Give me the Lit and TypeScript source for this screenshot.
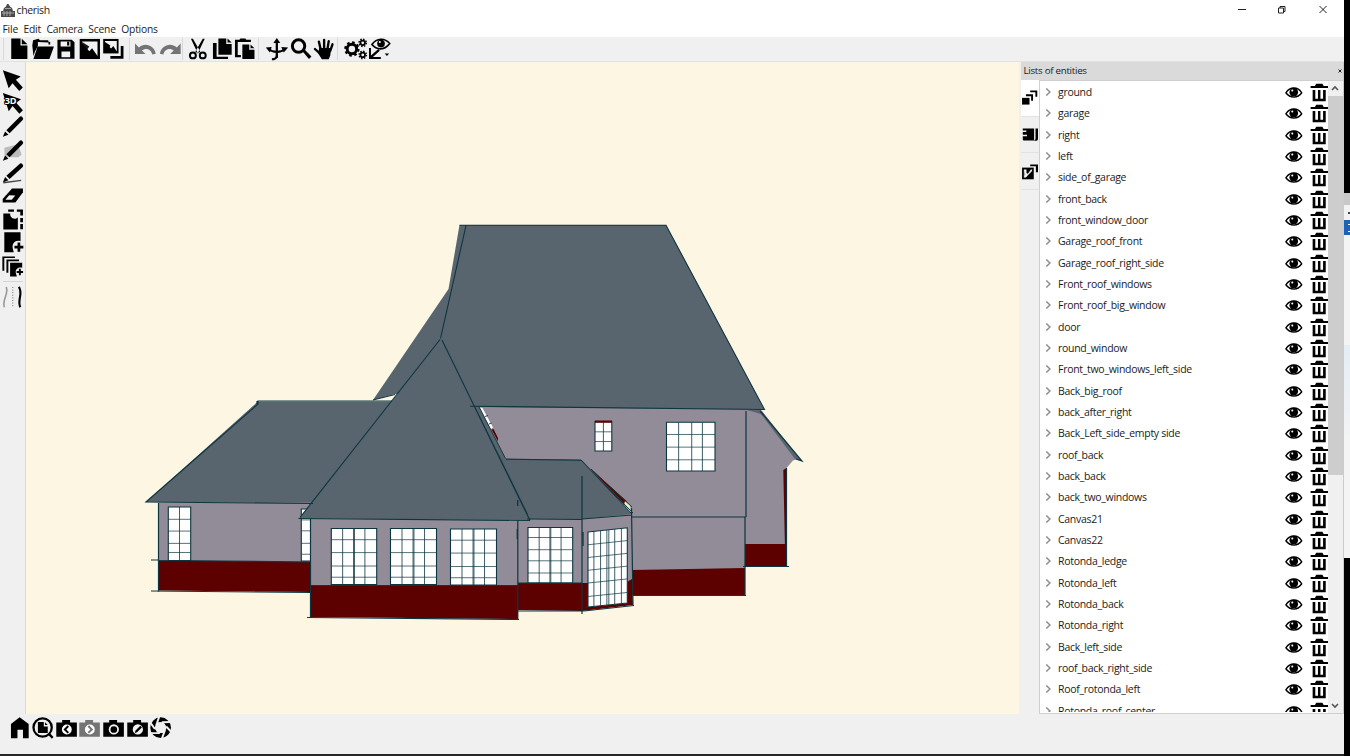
import { LitElement, html, svg, css } from "lit";
import { customElement } from "lit/decorators.js";

const INK = "#0d3640";
const SLATE = "#58646e";
const WALL = "#918c97";
const RED = "#5c0000";

// Every glyph is drawn on a 24 x 24 grid.
const glyphs: Record<string, unknown> = {
  file: svg`<path d="M4.3 1.3h9.4v7.2h7v13.6H4.3zM15 1.6l5.7 5.6H15z"/>`,
  open: svg`<path d="M1.3 8.500l.8-5.500 5.500-1.500 1.500 1.500h8.400v1.500l2 .3v2.700h-1.800V5.300L7 5v4L4 14.500 2.500 19z"/><path d="M6.600 9.500h16.700l-4.600 12.600H2.500z"/>`,
  save: svg`<path d="M3.500 2.500h14.500l2.800 2.600V22H3.500z"/><path fill="#f2f2f2" d="M6.700 4.300h10v5.200h-10zM7.600 14.500h8.800v6H7.600z"/><path d="M13.300 4.500h2.200v4h-2.200z"/>`,
  image: svg`<path d="M1.700 1.800h20.600v20.400H1.700z"/><path fill="#f2f2f2" d="M4.200 4.400h15.600v14.800l-5.500-8-2.800 3L4.200 6.500z"/><path d="M4.200 9 9 13l2.500-3.500L4.200 5z" opacity=".9"/>`,
  images: svg`<path d="M1.200 1.800h15.600v14.700H1.200z"/><path fill="#f2f2f2" d="M3 4h12v10.500L11.500 9 9.300 11.500 3 5.500z"/><path d="m3 8 4 3 1.500-2.500L3 5z"/><path d="M19 9h2.800v13H8.500v-3H19z"/>`,
  undo: svg`<path fill="#747474" d="M1 6.500v10.700h10.700L8 13.500c3-2.600 9-2.500 10.600 4.200l3.400-.9C21 8.500 11 4.700 5 10.500z"/>`,
  redo: svg`<path fill="#747474" d="M23 6.500v10.700H12.300l3.700-3.700c-3-2.600-9-2.500-10.600 4.200L2 16.800C3 8.500 13 4.700 19 10.500z"/>`,
  cut: svg`<path d="M5 1.500 7 1.500 14.500 14.500 12 16.500zM19 1.500h-2L9.500 14.500l2.500 2z"/><g fill="none" stroke="#000" stroke-width="2"><circle cx="7" cy="18.500" r="3"/><circle cx="17" cy="18.500" r="3"/></g>`,
  copy: svg`<path d="M8.500 1.300h8v5.500h5.500v11H8.500zM17.800 1.300 22 5.500h-4.200zM3 6h3.700v13.800h11.600v2.400H3z"/>`,
  paste: svg`<path d="M2 2.500h4.500l1-1.200h5l1 1.200h4.700V5H4.800v13H8v2.500H2zM9.500 7.500h7v5.200h5.300v9.500H9.500zM17.800 7.500l4 3.800h-4z"/>`,
  orbit: svg`<g fill="none" stroke="#000" stroke-width="2.300"><path d="M12 4v17"/><path d="M3.500 12c4.500 3.800 12.500 3.800 17 0"/></g><path d="m12 .8 3.500 5h-7zM23.500 10.500l-4.500 5-2.500-5.500zM.8 10.500l6-.5L5 15.500zM7 21.500c3-.3 4-1.500 4-3h2.200c0 3.500-3.500 5-6.200 5z"/>`,
  zoomer: svg`<circle cx="9.700" cy="9" r="6.300" fill="none" stroke="#000" stroke-width="3"/><path d="m13.800 14.500 2-2 7 7-2.500 2.600z"/>`,
  hand: svg`<g fill="none" stroke="#000" stroke-linecap="round" stroke-width="2.400"><path d="M9 13 7 4.500M12.300 12V2.700M15.700 12l1.300-8M18.500 14l2.300-6.800M8.500 17 3 12"/></g><path d="M7.500 11h12l-1 7.500-1.500 4h-7L6 16z"/>`,
  gears: svg`<g fill="none" stroke="#000"><circle cx="8" cy="12" r="4.800" stroke-width="3"/><circle cx="8" cy="12" r="6.700" stroke-width="2.200" stroke-dasharray="2.700 2.560"/><circle cx="19" cy="5.700" r="2.300" stroke-width="1.800"/><circle cx="19" cy="5.700" r="3.700" stroke-width="1.500" stroke-dasharray="1.500 1.400"/><circle cx="19" cy="18" r="2.300" stroke-width="1.800"/><circle cx="19" cy="18" r="3.700" stroke-width="1.500" stroke-dasharray="1.500 1.400"/></g>`,
  view: svg`<path d="M4 7.500C9 .500 17 .500 22 6.500 17 13.500 9 13.500 4 7.500z" fill="none" stroke="#000" stroke-width="1.700"/><circle cx="13.200" cy="6.500" r="3.900"/><circle cx="12" cy="5" r="1" fill="#fff"/><path d="M1 11h2v7.500L10.500 12l1.500 1.700L5 20.200h8v2H1zM17 16.500h4.500L19.200 19z"/>`,
  arrow: svg`<path d="m1.500 1.300 18.500 6.500-5 3.400 7.200 8-3.700 3.500-7-8-4 5.300z"/>`,
  arrow3d: svg`<path d="m1.500 1 18.800 6.500-5 3.700 7 7.800-3.700 3.500-7-8-4 5.500z"/><text x="3.500" y="12.500" class="g3d">3D</text>`,
  pen: svg`<path d="m18.500 2.200a2.200 2.200 0 0 1 3.300 3.300L8.500 19l-3.400-3.300z"/><path d="m3.800 17 3.500 3.400-5.800 2.200z"/>`,
  brush: svg`<path fill="#bcbcbc" d="M3 9 17 5.500l4 10.500-3.500 3H3.500z"/><path d="m18.500 2.200a2.200 2.200 0 0 1 3.300 3.300L8.500 19l-3.400-3.300z"/><path d="m3.800 17 3.500 3.400-5.800 2.200z"/>`,
  penline: svg`<path d="m18.500 2.200a2.200 2.200 0 0 1 3.300 3.300L8.500 17.500l-3.400-3.300z"/><path d="m3.800 15.500 3.500 3.400-5.800 2.200z"/><path d="M2 21.500 20.500 19" stroke="#444" stroke-width="1.400"/>`,
  eraser: svg`<path d="M11 3.500h11.300v4L14.500 18H1.300v-3.500z"/><path fill="#f2f2f2" d="m8 10.700 6.400.1-3.700 4.500H4.200z"/>`,
  crop: svg`<path d="M2 5.800h7.200c-1 4 4.400 7.300 7.800 3.700V22.300H2z"/><path d="M7 1.500h6V4H7zm9 0h6.300v6.300h-2.800V4H16zM19.500 10.300h2.800v4.400h-2.800zm0 6.300h2.800V22h-2.800z"/>`,
  addpage: svg`<path d="M3 1.300h16.800v9.200c-5-1.500-9.300 2-8 7.800l1 3.700H3z"/><path d="M13.500 15.300h3.200V12h2.800v3.300h3.200v2.800h-3.200v3.300h-2.800v-3.300h-3.200z"/>`,
  addstack: svg`<path d="M1 1.500h13v1.700H3v13H1zM5.200 4.700h13v1.700H7.200v12h-2z"/><path d="M9 8h12.500v5.300c-4-1.500-7.500 1.500-6.500 5.500l1 3.500H9z"/><path d="M15.800 16.500h2.300v-2.300h2v2.300h2.300v2.200h-2.300V21h-2v-2.300h-2.300z"/>`,
  curves: svg`<g fill="none"><path d="M5 1c3 7-4.500 13-2 21" stroke="#9a9a9a" stroke-width="1.700"/><path d="M11.800 1v21" stroke="#666" stroke-width="1" stroke-dasharray="1 1.700"/><path d="M18 1c5 7-2 13 1.500 21" stroke="#000" stroke-width="2.200"/></g>`,
  home: svg`<path d="M11.800 1 21 8v14.300h-5.800v-8.500H9.600v8.500H3V8z"/>`,
  search: svg`<circle cx="11.800" cy="11.500" r="9.300" fill="none" stroke="#000" stroke-width="2.300"/><path d="M7 6h6v4.500h4V17H7zM14.200 6.200 17 9h-2.800zM17 18.500l1.800-1.800 4 4.500-1.600 1.800z"/>`,
  camprev: svg`<path d="M1.300 6.500h6V4h8v2.500h6.900v14.300H1.300z"/><circle cx="12" cy="13.500" r="5" fill="#fff"/><path d="m13.500 10-3.500 3.500 3.500 3.500" fill="none" stroke="#000" stroke-width="2"/>`,
  camnext: svg`<path fill="#747474" d="M1.300 6.500h6V4h8v2.500h6.900v14.300H1.300z"/><circle cx="12" cy="13.500" r="5" fill="#fff"/><path d="m10.500 10 3.500 3.500-3.500 3.500" fill="none" stroke="#747474" stroke-width="2"/>`,
  cam: svg`<path d="M1.300 6.500h6V4h8v2.500h6.900v14.300H1.300z"/><circle cx="12" cy="13.500" r="4.300" fill="#000" stroke="#f2f2f2" stroke-width="1.800"/>`,
  camedit: svg`<path d="M1.300 6.500h6V4h8v2.500h6.900v14.300H1.300z"/><circle cx="12" cy="13.500" r="5.200" fill="#f2f2f2"/><path d="m9 17 .5-2.300 5-5 1.700 1.700-5 5z"/>`,
  aperture: svg`<circle cx="11.800" cy="11.700" r="8" fill="none" stroke="#000" stroke-width="5"/><path fill="#f0f0f0" d="M8.800 6.200h6l3.200 5.500-3.200 5.500h-6L5.600 11.700z"/><g stroke="#f0f0f0" stroke-width="2"><path d="M7.300 9.500 10.500 0M13 6.200 22.500 6M17.500 10.500l5.500 6M16.300 14 13 23M11 17.200H1M6 13 1 6"/></g>`,
  eye: svg`<path d="M3.200 12.300C8 5 17 5 21.500 12.300 17 19 8 19 3.200 12.300z" fill="none" stroke="#000" stroke-width="1.600"/><circle cx="12.300" cy="11.600" r="5"/><circle cx="10.600" cy="9.600" r="1.200" fill="#fff"/>`,
  trash: svg`<path d="M8.500 1.500h7L17 4h5v2.700H2.200V4h4.900z"/><path d="M4.500 9h3v10.500h3V9h2.800v10.500h3V9h3v13.500H4.500z"/>`,
  stackTab: svg`<path d="M1.500 12.500H12V22H1.500z"/><path d="M7 7.500h10v9h-2.700v-6.200H7zM13 2h10v9h-2.700V4.700H13z"/>`,
  bookTab: svg`<path d="M2.500 3.500H18.500v16.800H3.800c-1.200 0-1.300-1-1.300-2V14.500h6v-2.200h-6V8.500h5V6.200h-5zM20.500 3.500H24v14c0 2-1 3.300-3 3.300h-3c2-.5 2.500-1.500 2.500-3z"/>`,
  photoTab: svg`<path d="M1.500 6.500H18v16.500H1.500z"/><path fill="#f2f2f2" d="M4 9h3.700v5l2 1L14 9h2l-1 3-5 5-3 3.500H4z"/><path d="m4 10 2 6-2 4z" opacity=".3"/><path d="M13 2h11v11h-3V4.700h-8z"/>`,
};

const icon = (name: string) => html`<svg class="icon" viewBox="0 0 24 24">${glyphs[name]}</svg>`;

const TOP = [
  ["file", "open", "save", "image", "images"],
  ["undo", "redo"],
  ["cut", "copy", "paste"],
  ["orbit", "zoomer", "hand"],
  ["gears", "view"],
];
const SIDE = ["arrow", "arrow3d", "pen", "brush", "penline", "eraser", "crop", "addpage", "addstack"];
const BOTTOM = ["home", "search", "camprev", "camnext", "cam", "camedit", "aperture"];
const ENTITIES = [
  "ground", "garage", "right", "left", "side_of_garage", "front_back", "front_window_door",
  "Garage_roof_front", "Garage_roof_right_side", "Front_roof_windows", "Front_roof_big_window",
  "door", "round_window", "Front_two_windows_left_side", "Back_big_roof", "back_after_right",
  "Back_Left_side_empty side", "roof_back", "back_back", "back_two_windows", "Canvas21", "Canvas22",
  "Rotonda_ledge", "Rotonda_left", "Rotonda_back", "Rotonda_right", "Back_left_side",
  "roof_back_right_side", "Roof_rotonda_left", "Rotonda_roof_center",
];

@customElement("tool-strip")
export class ToolStrip extends LitElement {
  static properties = { names: { attribute: false } };
  declare names: string[];
  static styles = css`
    :host { display: flex; }
    :host([vertical]) { flex-direction: column; }
    .icon { width: 23.65px; height: 24px; flex: none; display: block; }
    :host([vertical]) .icon { width: 24px; height: 23.2px; }
    .g3d { font: bold 9.500px "Open Sans", sans-serif; fill: #fff; stroke: #000; stroke-width: 2px; paint-order: stroke; }
  `;
  render() {
    return this.names.map(icon);
  }
}

@customElement("entity-row")
export class EntityRow extends LitElement {
  static properties = { name: {} };
  declare name: string;
  static styles = css`
    :host { display: flex; align-items: center; height: 21.35px; flex: none; }
    .chev { width: 6px; height: 8px; margin: 0 7px 1px 5px; flex: none; }
    .name { flex: 1; white-space: nowrap; line-height: 21px; }
    .icon { width: 19px; height: 19px; flex: none; }
    .icon.last { margin: 0 -.5px 0 6.500px; }
  `;
  render() {
    return html`
      <svg class="chev" viewBox="0 0 6 8"><path d="M1.300 .500 5 4 1.300 7.500" fill="none" stroke="#8c8c8c" stroke-width="1.500"/></svg>
      <span class="name">${this.name}</span>
      <svg class="icon" viewBox="1 1 22 22">${glyphs.eye}</svg>
      <svg class="icon last" viewBox="1.500 .500 21.500 23" preserveAspectRatio="none">${glyphs.trash}</svg>
    `;
  }
}

@customElement("house-scene")
export class HouseScene extends LitElement {
  static styles = css`
    :host { display: block; background: #fdf6e3; }
    .scene { display: block; width: 100%; height: 100%; }
  `;

  // Four-cornered window: left/right edges may have different heights.
  pane(x1: number, x2: number, a: number, b: number, c: number, d: number, cols: number[], rows: number[]) {
    const at = (t: number, top: number, bottom: number) => top + (bottom - top) * t;
    return svg`
      <path d="M${x1} ${a}L${x2} ${b}V${d}L${x1} ${c}Z" fill="#fff" stroke=${INK} stroke-width="1.100"/>
      ${cols.map((t) => {
        const x = at(t, x1, x2);
        return svg`<path d="M${x} ${at(t, a, b)}V${at(t, c, d)}" stroke=${INK} stroke-width=".8"/>`;
      })}
      ${rows.map((t) => svg`<path d="M${x1} ${at(t, a, c)}L${x2} ${at(t, b, d)}" stroke=${INK} stroke-width=".7"/>`)}
    `;
  }

  render() {
    const cols4 = [0.25, 0.49, 0.51, 0.74];
    const rows5 = [0.2, 0.43, 0.67, 0.87];
    return html`
      <svg class="scene" viewBox="26 62 993 652" preserveAspectRatio="none">
        <path fill=${WALL} d="M470 406 746 409l16 2 36 48-5 1.500-6.500 7.500V545H745v25l-113 2V520H520z"/>
        <path fill=${RED} d="M632 570l113-2v27.500l-113-.5zM745 544h41.500v22H745zM783.300 470l3.200-2v76h-1.600z"/>
        <path fill=${SLATE} d="M459.500 225H666l98.500 184.500L476 407l-66-5-4-8H395l-22 6 75.500-111z"/>
        <path fill=${SLATE} d="m747 410 14 0 41.500 51.500-7.500-2.500-34-45z"/>
        <path fill=${SLATE} d="m470 406 9 1 27 52 14 3v50z"/>
        <path fill="#fff" d="m480 407.500 2.500 .500 10.500 19.500-2 1.500z"/>
        <path fill=${RED} d="m491.500 429.500 2-.5 4.500 9v3.500z"/>
        <path fill="none" stroke=${INK} stroke-width=".9" d="m479 407 26.500 51.500M485 416.500l3-1M489 424l2.500-1"/>
        <path fill=${SLATE} d="M258 401.500h150L313 503.500 146 502z"/>
        <path fill=${WALL} d="M158.500 502.500H312V561H158.500z"/>
        <path fill=${RED} d="M158.500 560.500 311 561.500v30.500l-152.500-1.500z"/>
        ${this.pane(168.3, 190.7, 507, 507, 560.5, 560.5, [0.5], [0.23, 0.45, 0.68, 0.85])}
        ${this.pane(301.3, 311, 509, 509, 561, 561, [], [0.21, 0.42, 0.66, 0.87])}
        <path fill=${WALL} d="M518 519 582 518.500 632 514.500l.5 67L582 588l-64-1z"/>
        <path fill=${RED} d="M518 583h70v24l39-4v-21l5-3 1 26-51 6-64-1z"/>
        <path fill=${SLATE} d="m503 458.500 78 1.500 1.500.500 49.500 53.500-50 5H525z"/>
        <path fill=${RED} d="m592 471 1 0 33 29.500 1 2-2 2z"/>
        <path fill="#f3e6b8" d="m625 501 5 4 1 8-7-8z"/>
        <path fill="none" stroke=${INK} stroke-width="1" d="m581 460 51 54M591 469l41 38M600 480l33 33"/>
        <path fill=${WALL} d="M310 518.500h208V586H310z"/>
        <path fill=${RED} d="M310 585h208v34l-208-2z"/>
        <path fill=${SLATE} d="M441 339 476 406l55 114-232-1.500z"/>
        ${this.pane(331.3, 376.7, 528.5, 528.5, 584.5, 584.5, cols4, rows5)}
        ${this.pane(390.5, 436.5, 528.5, 528.5, 584.5, 584.5, cols4, rows5)}
        ${this.pane(450.5, 496.5, 529, 529, 585, 585, cols4, rows5)}
        ${this.pane(528, 572.7, 527.5, 527.5, 583, 583, cols4, [0.18, 0.4, 0.6, 0.82])}
        ${this.pane(588, 627.3, 532, 527.8, 607, 603, [0.15, 0.32, 0.48, 0.53, 0.68, 0.85], [0.17, 0.34, 0.51, 0.68, 0.86])}
        ${this.pane(595, 611.8, 421.5, 421.5, 451, 451, [0.5], [0.35, 0.68])}
        <path fill=${RED} d="M595 420.500h17v2.300h-17z"/>
        ${this.pane(666.5, 715, 422.3, 422.3, 471, 471, [0.25, 0.52, 0.74], [0.25, 0.51, 0.77])}
        <g fill="none" stroke=${INK} stroke-width="1.200">
          <path d="M459.500 225.200H666l98.500 184.300-294.500-3.300M466 225.500 440.500 338.500M373 400l22-5.500" stroke-width="1.100"/>
          <path d="M442 340 530 520.500M474.500 406.500l53 108M440 339.500 300 517.500M298.500 518.500 530 520.500" stroke-width="1.100"/>
          <path d="M392 401H258v3L146 502l167 1.500M257 401v3"/>
          <path d="M158.500 503v89M151 560h8M151 591l160 1.500M158 560.500l153 1.500" />
          <path d="M310.500 519v99M307 617.500l212 2M517.800 520v99M518 611h66l50-5.500M310 585.500h208M506 459.200l75 1M518 583h64"/>
          <path d="M582 476v138M582 519l50-4M631.500 508l1.500 97M527 519l55 .500"/>
          <path d="M632 517h114M746 411v106M745 517v79M633 595.500h113M760 411l42 50-6-2M786.500 468v98M743 566.500h46"/>
        </g>
        <path d="M517.700 500v6M517.300 529v10M583 532v14" stroke=${INK} stroke-width="1.300"/>
      </svg>
    `;
  }
}

@customElement("app-root")
export class AppRoot extends LitElement {
  static styles = css`
    :host { display: grid; grid-template-columns: 1344px 6px; width: 1350px; height: 756px; overflow: hidden;
      font: 10.500px "Open Sans", "Noto Sans", sans-serif; letter-spacing: -.29px; color: #1b1b1b; background: #f0f0f0; }
    .win { display: grid; grid-template-rows: 20px 17px 24px 1px 652px 40px 2px; min-width: 0; }
    .title { background: #fff; display: flex; align-items: center; font-size: 10.500px; letter-spacing: -.35px; }
    .logo { width: 15px; height: 15px; margin-right: 1.500px; }
    .controls { margin-left: auto; display: flex; width: 106px; height: 20px; }
    .menu { background: #fff; display: flex; gap: 5.500px; padding: .5px 0 0 2.500px; line-height: 17px; font-size: 10.300px; letter-spacing: -.2px; }
    .tools { display: flex; padding-left: 3px; }
    .sep { width: 1px; height: 22px; margin-top: 1px; background: #d9d9d9; flex: none; }
    .g0 { margin: 0 4px 0 3px; } .g1 { margin: 0 1px 0 4px; } .g2 { margin: 0 1.500px 0 2.500px; } .g3 { margin: 0 1.500px 0 5.500px; } .g4 { margin-left: 6px; }
    .edge { background: #e2e2e2; }
    .mid { display: grid; grid-template-columns: 26px 993px 2px 323px; min-height: 0; }
    .left { border-right: 1px solid #d8d8d8; padding: 7px 0 0 .5px; box-sizing: border-box; }
    .rule { height: 1px; background: #d5d5d5; margin: 3px 2px 4px; }
    .dock { display: grid; grid-template-rows: 18px 634px; min-height: 0; border-right: 1px solid #ccc; }
    .head { background: #dadada; display: flex; justify-content: space-between; align-items: center; padding: 0 1px 1px 2.500px; font-size: 9.800px; letter-spacing: -.3px; line-height: 16px; }
    .close { width: 4px; height: 4px; }
    .body { display: grid; grid-template-columns: 18px 1fr; min-height: 0; }
    .tab { height: 36.700px; box-sizing: border-box; border-bottom: 1px solid #e2e2e2; display: flex; align-items: center; justify-content: center; }
    .tab.on { background: #fff; }
    .tab .icon { width: 17px; height: 17px; margin-right: 1px; }
    .list { display: grid; grid-template-columns: 288px 1fr; border: 1px solid #cfcfcf; border-width: 1px 0 1px 1px; height: 633.500px; box-sizing: border-box; background: #fff; overflow: hidden; }
    .rows { overflow: hidden; display: flex; flex-direction: column; min-height: 0; height: 631px; padding-top: .7px; box-sizing: border-box; }
    .scroll { display: flex; flex-direction: column; background: #f0f0f0; }
    .thumb { background: #cdcdcd; height: 379px; }
    .btn { width: 14px; height: 15px; display: block; }
    .gap { flex: 1; }
    .bottom { display: flex; padding-left: 7.500px; padding-top: 1.500px; }
    .base { background: #262626; }
    .behind { display: grid; grid-template-rows: 193px 12px 15px 15px 323px 1fr; background: #000; }
    .b1 { background: #c8c8c8; } .b2, .b3 { display: flex; align-items: center; justify-content: flex-end; } .b2 { background: #f3f3f3; } .b3 { background: #1c62b9; } .b4 { background: linear-gradient(#f4f4f4 110px, #e5edf5 110px, #f4f4f4 210px); }
    .mark { width: 2px; height: 2px; background: #444; } .lines { width: 2px; height: 6px; border: solid #fff; border-width: 1px 0; }
  `;

  render() {
    return html`
      <div class="win">
        <div class="title">
          <svg class="logo" viewBox="0 0 15 15"><path fill="#4b4b4b" d="M1 14V8h2l1-3 2-1.500L7 1l1.500 0L10 3.500 12 5l1 3h2v6z"/><path stroke="#bbb" stroke-width=".8" d="M2 10h12M4 8v5M7 8v5M10 8v5M5 5.500h6"/></svg>
          <span>cherish</span>
          <svg class="controls" viewBox="0 0 106 20"><g fill="none" stroke="#222" stroke-width="1"><path d="M0 9.500h8M40.500 8h5v5h-5zM42 8V6.500h5v5h-1.500M81.500 6l7 7M88.500 6l-7 7"/></g></svg>
        </div>
        <div class="menu"><span>File</span><span>Edit</span><span>Camera</span><span>Scene</span><span>Options</span></div>
        <div class="tools">
          <span class="sep"></span>
          ${TOP.map((names, i) => html`${i ? html`<span class="sep"></span>` : ""}<tool-strip class="g${i}" .names=${names}></tool-strip>`)}
        </div>
        <div class="edge"></div>
        <div class="mid">
          <div class="left">
            <tool-strip vertical .names=${SIDE}></tool-strip>
            <div class="rule"></div>
            <tool-strip vertical .names=${["curves"]}></tool-strip>
          </div>
          <house-scene></house-scene>
          <div></div>
          <div class="dock">
            <div class="head"><span>Lists of entities</span><svg class="close" viewBox="0 0 4 4"><path d="M.5.5l3 3M3.500.500l-3 3" stroke="#222"/></svg></div>
            <div class="body">
              <div>
                <div class="tab on">${icon("stackTab")}</div>
                <div class="tab">${icon("bookTab")}</div>
                <div class="tab">${icon("photoTab")}</div>
              </div>
              <div class="list">
                <div class="rows">${ENTITIES.map((n) => html`<entity-row .name=${n}></entity-row>`)}</div>
                <div class="scroll">
                  <svg class="btn" viewBox="0 0 14 15"><path d="m4 9 3-3 3 3" fill="none" stroke="#555" stroke-width="1.600"/></svg>
                  <div class="thumb"></div><div class="gap"></div>
                  <svg class="btn" viewBox="0 0 14 15"><path d="m4 6 3 3 3-3" fill="none" stroke="#555" stroke-width="1.600"/></svg>
                </div>
              </div>
            </div>
          </div>
        </div>
        <div class="bottom"><tool-strip .names=${BOTTOM}></tool-strip></div>
        <div class="base"></div>
      </div>
      <div class="behind"><div></div><div class="b1"></div><div class="b2"><i class="mark"></i></div><div class="b3"><i class="lines"></i></div><div class="b4"></div></div>
    `;
  }
}
